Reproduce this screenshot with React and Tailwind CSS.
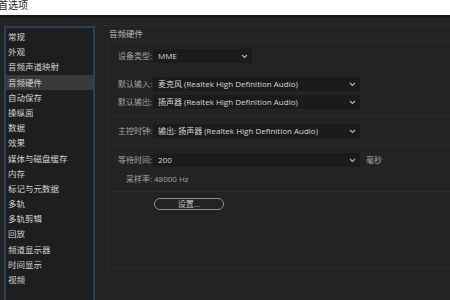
import React from "react";

const items = [
  "常规",
  "外观",
  "音频声道映射",
  "音频硬件",
  "自动保存",
  "操纵面",
  "数据",
  "效果",
  "媒体与磁盘缓存",
  "内存",
  "标记与元数据",
  "多轨",
  "多轨剪辑",
  "回放",
  "频道显示器",
  "时间显示",
  "视频",
];

function Chevron() {
  return (
    <svg width="7" height="5" viewBox="0 0 7 5" className="shrink-0">
      <path d="M1 1 L3.5 3.5 L6 1" stroke="#b5b5b5" strokeWidth="1.1" fill="none" />
    </svg>
  );
}

function Select({ value, width }) {
  return (
    <div
      className={`flex items-center justify-between h-[14px] bg-[#1b1b1b] pl-[5px] pr-[4px] text-[#d6d6d6] ${width}`}
    >
      <span className="truncate">{value}</span>
      <Chevron />
    </div>
  );
}

function Row({ label, children, className = "" }) {
  return (
    <div className={`flex items-center ${className}`}>
      <div className="w-[38px] text-right pr-[1px] text-[#a3a3a3]">{label}</div>
      {children}
    </div>
  );
}

export default function App() {
  return (
    <div
      className="w-[450px] h-[300px] overflow-hidden flex flex-col bg-[#232323]"
      style={{ fontFamily: '"Open Sans", "Noto Sans CJK SC", sans-serif' }}
    >
      <div className="h-[15px] shrink-0 bg-white text-[10px] leading-[11px] text-[#222] ml-[-2px]">
        首选项
      </div>
      <div className="flex-1 flex border-t-[3px] border-[#161616] min-h-0">
        <div className="ml-[4px] mt-[8px] w-[91px] shrink-0 border-2 border-b-0 border-[#2e4054] bg-[#1e1e1e] pt-[1px] text-[8.5px] text-[#d2d2d2]">
          {items.map((it) => (
            <div
              key={it}
              className={`h-[15.2px] leading-[15.2px] pl-[2px] ${
                it === "音频硬件" ? "bg-[#3a3a3a]" : ""
              }`}
            >
              {it}
            </div>
          ))}
        </div>
        <div className="ml-[5px] flex-1 flex flex-col pt-[7px] text-[8px]">
          <div className="h-[17px] border-t border-b border-[#2b2b2b] pl-[9px] leading-[15px] text-[#b8b8b8] text-[8.5px]">
            音频硬件
          </div>
          <div className="ml-[7px] mt-[1px] h-[226px] border-l border-b border-[#2d2d2d] flex flex-col">
            <Row label="设备类型:" className="mt-[6px] ml-[7px]">
              <Select value="MME" width="w-[99px]" />
            </Row>
            <div className="mt-[14px] ml-[7px] flex flex-col gap-[4px]">
              <Row label="默认输入:">
                <Select value="麦克风 (Realtek High Definition Audio)" width="w-[207px]" />
              </Row>
              <Row label="默认输出:">
                <Select value="扬声器 (Realtek High Definition Audio)" width="w-[207px]" />
              </Row>
            </div>
            <div className="mt-[7px] border-t border-[#2d2d2d]" />
            <Row label="主控时钟:" className="mt-[7px] ml-[7px]">
              <Select value="输出: 扬声器 (Realtek High Definition Audio)" width="w-[207px]" />
            </Row>
            <div className="mt-[7px] border-t border-[#2d2d2d]" />
            <Row label="等待时间:" className="mt-[7px] ml-[7px]">
              <Select value="200" width="w-[207px]" />
              <span className="ml-[6px] text-[#a3a3a3]">毫秒</span>
            </Row>
            <Row label="采样率:" className="mt-[6px] ml-[7px]">
              <span className="pl-[1px] text-[#a3a3a3]">48000 Hz</span>
            </Row>
            <div className="mt-[6px] border-t border-[#2d2d2d]" />
            <div className="mt-[6px] ml-[46px]">
              <div className="w-[70px] h-[12px] rounded-full border border-[#8e8e8e] flex items-center justify-center text-[#c4c4c4] leading-none">
                设置...
              </div>
            </div>
          </div>
        </div>
      </div>
    </div>
  );
}
